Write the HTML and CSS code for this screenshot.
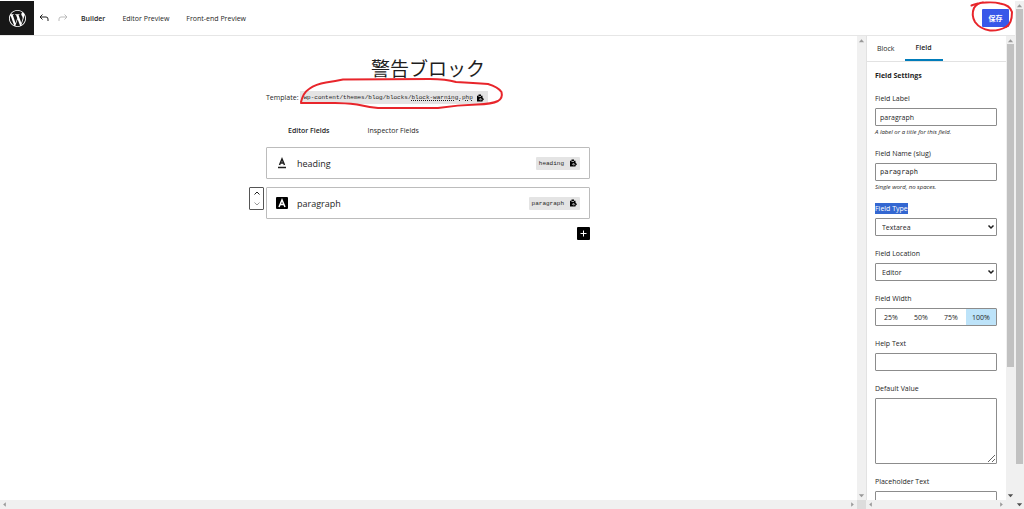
FILE: index.html
```html
<!DOCTYPE html>
<html lang="ja">
<head>
<meta charset="utf-8">
<title>警告ブロック</title>
<link rel="stylesheet" href="styles.css">
</head>
<body>
<svg class="defs" aria-hidden="true">
  <symbol id="clip" viewBox="0 0 16 16"><path d="M2 3.500h3V1h5v2.500h3V7l3 3.500-3 3V15H2z"/><path d="M5 5h5M12.500 10.500H7.500M9.500 8l-2.500 2.500L9.500 13" fill="none" stroke="#e4e4e4" stroke-width="1.400"/></symbol>
  <symbol id="up" viewBox="0 0 8 8"><path d="M1 6h6L4 2.500z"/></symbol>
  <symbol id="down" viewBox="0 0 8 8"><path d="M1 2.500h6L4 6z"/></symbol>
  <symbol id="left" viewBox="0 0 8 8"><path d="M5.500 1.500v5L2.500 4z"/></symbol>
  <symbol id="right" viewBox="0 0 8 8"><path d="M2.500 1.500v5L5.500 4z"/></symbol>
</svg>
<div class="window">
  <div class="app">
    <header class="topbar">
      <a class="logo" href="#" aria-label="WordPress">
        <svg viewBox="0 0 24 24" fill="#fff" fill-rule="evenodd"><path d="M21.469 6.825c.84 1.537 1.318 3.3 1.318 5.175 0 3.979-2.156 7.456-5.363 9.325l3.295-9.527c.615-1.54.82-2.771.82-3.864 0-.405-.026-.78-.07-1.110m-7.981.105c.647-.030 1.232-.105 1.232-.105.582-.075.514-.93-.067-.899 0 0-1.755.135-2.880.135-1.064 0-2.850-.15-2.850-.15-.585-.030-.661.855-.075.885 0 0 .54.061 1.125.090l1.680 4.605-2.370 7.080L5.354 6.900c.649-.030 1.234-.1 1.234-.1.585-.075.516-.93-.065-.896 0 0-1.746.138-2.874.138-.2 0-.438-.008-.69-.015C4.911 3.150 8.235 1.215 12 1.215c2.809 0 5.365 1.072 7.286 2.833-.046-.003-.091-.009-.141-.009-1.060 0-1.812.923-1.812 1.914 0 .89.513 1.643 1.060 2.531.411.72.89 1.643.89 2.977 0 .915-.354 1.994-.821 3.479l-1.075 3.585-3.900-11.610.001.014zM12 22.784c-1.059 0-2.081-.153-3.048-.437l3.237-9.406 3.315 9.087c.024.053.050.101.078.149-1.120.393-2.325.609-3.582.609M1.211 12c0-1.564.336-3.050.935-4.390L7.290 21.709C3.694 19.960 1.212 16.271 1.211 12M12 0C5.385 0 0 5.385 0 12s5.385 12 12 12 12-5.385 12-12S18.615 0 12 0"/></svg>
      </a>
      <button class="tool" aria-label="Undo"><svg viewBox="0 0 12 12"><path d="M4.500 2.500L2 5l2.500 2.500M2 5h6q2 0 2 2v2"/></svg></button>
      <button class="tool dim" aria-label="Redo"><svg viewBox="0 0 12 12"><path d="M7.500 2.500L10 5 7.500 7.500M10 5H4Q2 5 2 7v2"/></svg></button>
      <nav class="modes">
        <a class="on" href="#">Builder</a><a href="#">Editor Preview</a><a href="#">Front-end Preview</a>
      </nav>
      <div class="save-wrap">
        <button class="save">保存</button>
        <svg class="mark" viewBox="0 0 46 32"><path d="M2.500 5.500Q8 3 17 2.500T31 3.500Q41 5 43 12 43 24 37 27 30 31 21 30.500 11 29 6 22 2 15 5 8 8 3 14 2.500"/></svg>
      </div>
    </header>
    <div class="body">
      <div class="pane">
        <div class="row">
          <main class="canvas">
            <div class="column">
              <h1>警告ブロック</h1>
              <div class="template">
                <span>Template:</span>
                <div class="path">
                  <code>wp-content/themes/blog/blocks/<u>block-warning.php</u></code>
                  <button class="copy" aria-label="Copy path"><svg><use href="#clip"/></svg></button>
                  <svg class="mark" viewBox="0 0 204 32"><path d="M1 26Q3 17 9 13 16 8 26 6.500 36 5 43 3.500L130 3Q146 3 156 6 174 7 188 8 198 11 201.500 16 203 22 198 25 192 28 177 28.500 158 29 138 32L78 32Q68 31 57 28.500 44 27 35 27L1 27"/></svg>
                </div>
              </div>
              <nav class="tabs"><a class="on" href="#">Editor Fields</a><a href="#">Inspector Fields</a></nav>
              <section class="card">
                <svg class="type" viewBox="0 0 12 12"><path d="M3.500 8L6 2l2.500 6M4 6h4M2 10.500h8"/></svg>
                <span class="name">heading</span>
                <div class="chip"><code>heading</code><button class="copy" aria-label="Copy heading"><svg><use href="#clip"/></svg></button></div>
              </section>
              <section class="card">
                <div class="mover">
                  <button aria-label="Move up"><svg viewBox="0 0 8 8"><path d="M1.500 5.500L4 3l2.500 2.500"/></svg></button>
                  <button class="dim" aria-label="Move down"><svg viewBox="0 0 8 8"><path d="M1.500 2.500L4 5l2.500-2.500"/></svg></button>
                </div>
                <svg class="type solid" viewBox="0 0 12 12"><rect width="12" height="12" rx="1"/><path d="M3 10l3-7 3 7M4 7.500h4"/></svg>
                <span class="name">paragraph</span>
                <div class="chip"><code>paragraph</code><button class="copy" aria-label="Copy paragraph"><svg><use href="#clip"/></svg></button></div>
              </section>
              <button class="add" aria-label="Add field"><svg viewBox="0 0 13 13"><path d="M6.500 3.500v6M3.500 6.500h6"/></svg></button>
            </div>
          </main>
          <div class="bar v faint"><svg><use href="#up"/></svg><svg><use href="#down"/></svg></div>
        </div>
        <div class="foot"><div class="bar h"><svg><use href="#left"/></svg><svg><use href="#right"/></svg></div><i class="corner"></i></div>
      </div>
      <aside class="pane side">
        <div class="row">
          <div class="panel">
            <nav class="side-tabs"><a href="#">Block</a><a class="on" href="#">Field</a></nav>
            <form class="settings">
              <h2>Field Settings</h2>
              <div class="field"><label for="f1">Field Label</label><input id="f1" value="paragraph"><em>A label or a title for this field.</em></div>
              <div class="field"><label for="f2">Field Name (slug)</label><input id="f2" class="slug" value="paragraph"><em>Single word, no spaces.</em></div>
              <div class="field"><label for="f3"><mark>Field Type</mark></label><div class="select"><select id="f3"><option>Textarea</option></select><svg viewBox="0 0 8 8"><path d="M1.500 2.500L4 5l2.500-2.500"/></svg></div></div>
              <div class="field"><label for="f4">Field Location</label><div class="select"><select id="f4"><option>Editor</option></select><svg viewBox="0 0 8 8"><path d="M1.500 2.500L4 5l2.500-2.500"/></svg></div></div>
              <div class="field"><label id="fw">Field Width</label><div class="widths" role="group" aria-labelledby="fw"><button type="button">25%</button><button type="button">50%</button><button type="button">75%</button><button type="button" class="on">100%</button></div></div>
              <div class="field"><label for="f5">Help Text</label><input id="f5"></div>
              <div class="field"><label for="f6">Default Value</label><textarea id="f6"></textarea></div>
              <div class="field"><label for="f7">Placeholder Text</label><input id="f7"></div>
            </form>
          </div>
          <div class="bar v"><svg class="soft"><use href="#up"/></svg><i class="thumb side-thumb"></i><svg><use href="#down"/></svg></div>
        </div>
        <div class="foot"><div class="bar h"><svg><use href="#left"/></svg><svg><use href="#right"/></svg></div><i class="corner pale"></i></div>
      </aside>
    </div>
  </div>
  <div class="bar v"><svg class="soft"><use href="#up"/></svg><i class="thumb page-thumb"></i><svg><use href="#down"/></svg></div>
</div>
</body>
</html>
```
FILE: styles.css
```css
* { box-sizing: border-box; }
body { margin: 0; background: #fff; color: #1e1e1e; font: 7px/11px "Open Sans", "Noto Sans CJK JP", sans-serif; }
a { color: inherit; text-decoration: none; }
button, input, select, textarea { font: inherit; color: inherit; margin: 0; padding: 0; border: 0; background: none; }
button { display: flex; align-items: center; justify-content: center; }
code { font: 6px/13px "Liberation Mono", monospace; }
.defs { position: absolute; width: 0; height: 0; }
.window { display: flex; height: 100vh; padding-top: 1px; overflow: hidden; }
.app { flex: 1; min-width: 0; display: flex; flex-direction: column; }
.topbar { display: flex; align-items: center; height: 35px; border-bottom: 1px solid #e6e6e6; flex: none; }
.logo { width: 34px; height: 34px; background: #171717; display: grid; place-items: center; margin-right: 4px; }
.logo svg { width: 17px; height: 17px; }
.tool { width: 12px; height: 12px; margin-right: 7px; }
.tool svg { width: 12px; height: 12px; fill: none; stroke: #1e1e1e; stroke-width: 1; }
.tool.dim svg { stroke: #bbb; }
.modes { display: flex; gap: 17px; padding-left: 5px; }
.on { font-weight: 600; }
.save-wrap { position: relative; margin-left: auto; padding-right: 6px; }
.save { width: 27px; height: 18px; border-radius: 1px; background: #3858e9; color: #fff; font-weight: 700; }
.mark { position: absolute; fill: none; stroke: #e8252b; stroke-width: 2; stroke-linecap: round; stroke-linejoin: round; overflow: visible; pointer-events: none; }
.save-wrap .mark { left: -13px; top: -9px; width: 46px; height: 32px; }
.body { flex: 1; display: flex; min-height: 0; }
.pane { flex: 1; min-width: 0; display: flex; flex-direction: column; }
.side { flex: 0 0 149px; }
.row { flex: 1; display: flex; min-height: 0; }
.canvas { flex: 1; overflow: hidden; padding: 17px 21px 0 20px; }
.column { max-width: 324px; margin: 0 auto; }
h1 { margin: 0 0 8px; font: 400 19px/30px "Noto Sans CJK JP", sans-serif; text-align: center; }
.template { display: flex; align-items: center; gap: 2px; }
.path { position: relative; display: flex; align-items: center; gap: 3px; padding: 0 4px 0 3px; background: #e4e4e4; }
.path u { text-decoration: underline dotted; text-underline-offset: 1px; }
.path .mark { left: 0; top: -15px; width: 204px; height: 32px; }
.copy { width: 8px; height: 8px; }
.copy svg { width: 8px; height: 8px; }
.tabs { display: flex; gap: 38px; padding: 21px 0 11px 22px; }
.card { position: relative; display: flex; align-items: center; height: 32px; margin-bottom: 8px; padding: 0 9px; border: 1px solid #bcbcbc; border-radius: 1px; }
.type { width: 12px; height: 12px; fill: none; stroke: #1e1e1e; stroke-width: 1.5; }
.solid rect { fill: #000; stroke: none; }
.solid path { stroke: #fff; }
.name { padding-left: 9px; font-size: 9px; }
.chip { display: flex; align-items: center; gap: 5px; margin-left: auto; padding: 0 3px; background: #e4e4e4; border-radius: 1px; }
.mover { position: absolute; left: -18px; top: -1px; width: 15px; height: 23px; border: 1px solid #555; border-radius: 1px; }
.mover button { width: 100%; height: 50%; }
.mover svg { width: 8px; height: 8px; fill: none; stroke: #1e1e1e; }
.mover .dim svg { stroke: #999; }
.add { width: 13px; height: 13px; margin-left: auto; background: #000; border-radius: 1px; }
.add svg { width: 13px; height: 13px; stroke: #fff; }
.panel { flex: 1; min-width: 0; overflow: hidden; border-left: 1px solid #e2e2e2; }
.side-tabs { display: flex; height: 26px; border-bottom: 1px solid #e2e2e2; }
.side-tabs a { padding: 7px 10px 0; }
.side-tabs .on { padding: 6px 11px 0; border-bottom: 2px solid #007cba; }
.settings { padding: 8px 9px 0 8px; }
h2 { margin: 0 0 12px; font-size: 7px; line-height: 11px; }
.field { display: flex; flex-direction: column; margin-bottom: 12px; }
.field label { margin-bottom: 4px; }
.field input, .field select, .field textarea, .widths { width: 100%; height: 18px; border: 1px solid #8c8c8c; border-radius: 1px; background: #fff; }
.field input { padding: 0 4px; }
.field .slug { font-family: "DejaVu Sans Mono", monospace; }
.field textarea { height: 66px; resize: vertical; }
.field em { margin-top: 2px; line-height: 8px; font-size: 6px; }
mark { padding: 1px 0; background: #3367d1; color: #fff; }
.select { position: relative; }
.field select { display: block; appearance: none; padding: 0 6px; }
.select svg { position: absolute; right: 2px; top: 5px; width: 8px; height: 8px; fill: none; stroke: #1e1e1e; stroke-width: 1.5; }
.widths { display: grid; grid-template-columns: repeat(4, 1fr); }
.widths .on { background: #bde3f9; font-weight: 400; }
.foot { display: flex; height: 9px; flex: none; }
.bar { display: flex; justify-content: space-between; background: #f0f0f0; }
.bar svg { width: 7px; height: 7px; flex: none; fill: #505050; }
.bar.v { width: 9px; flex: none; flex-direction: column; align-items: center; padding: 1px 0; }
.bar.h { flex: 1; align-items: center; padding: 0 1px; }
.bar.h svg, .faint svg, .bar .soft { fill: #999; }
.thumb { width: 7px; background: #c1c1c1; }
.side-thumb { height: 70%; margin-bottom: auto; }
.page-thumb { height: 90%; margin-bottom: auto; }
.corner { width: 9px; background: #dcdcdc; }
.pale { background: #f0f0f0; }
```
